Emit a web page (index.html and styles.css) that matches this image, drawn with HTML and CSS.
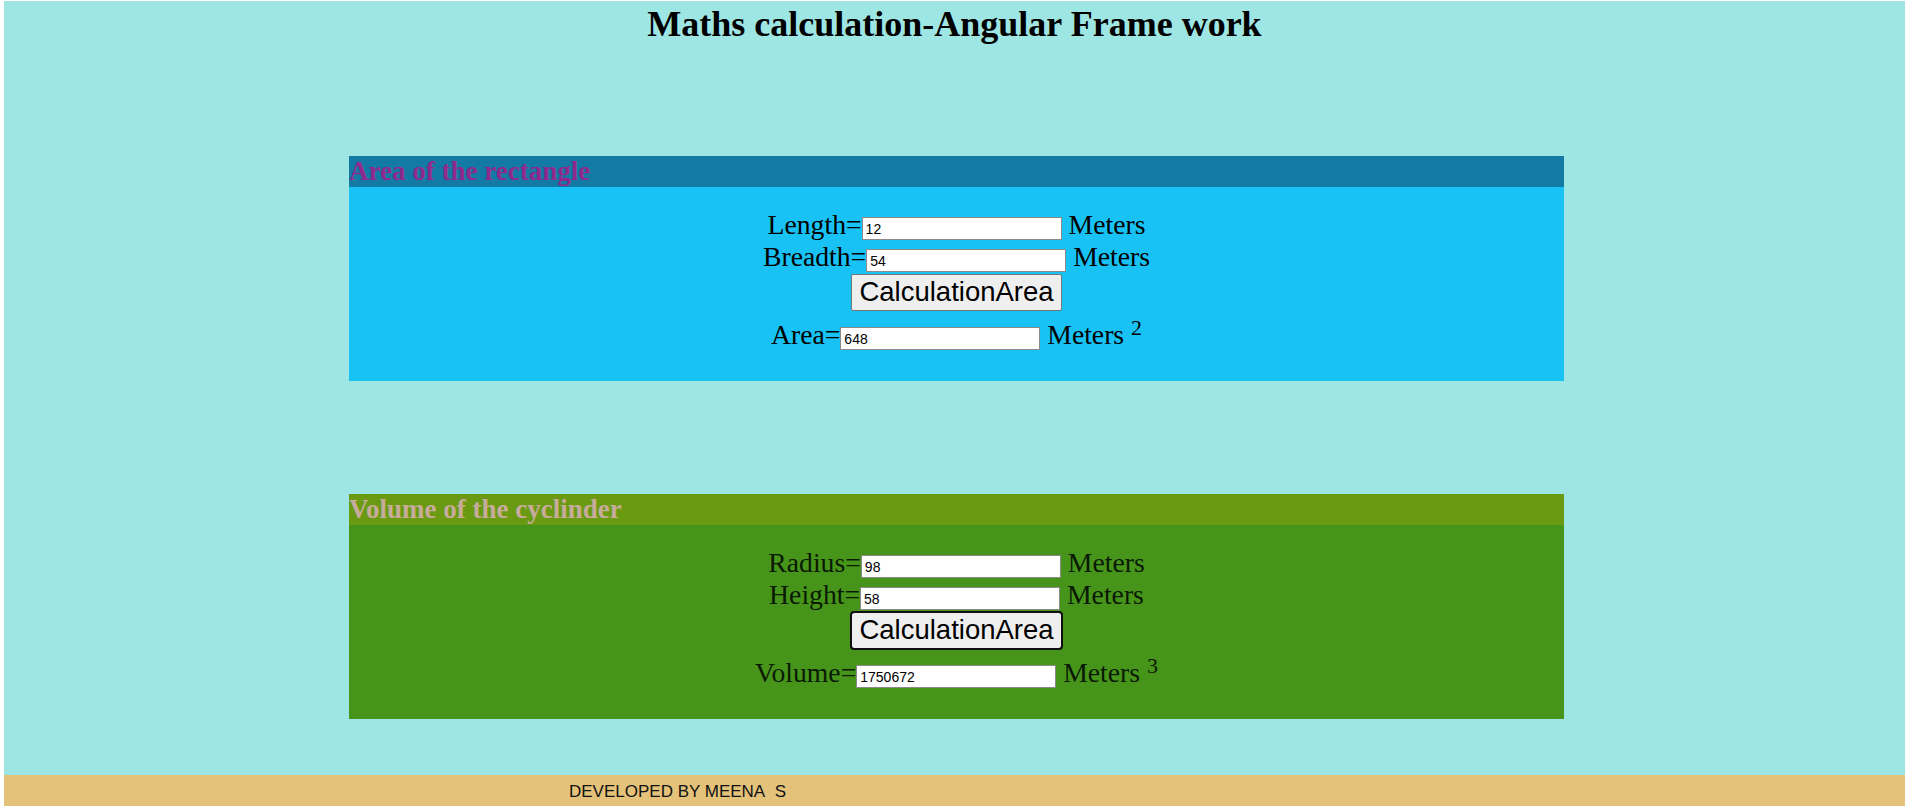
FILE: index.html
```html
<!DOCTYPE html>
<html lang="en">
<head>
<meta charset="utf-8">
<title>Maths calculation</title>
<link rel="stylesheet" href="styles.css">
</head>
<body>
<div class="page">
  <h1 class="title">Maths calculation-Angular Frame work</h1>

  <section class="card card-rect">
    <h3 class="card-head">Area of the rectangle</h3>
    <div class="card-body">
      <div class="row">Length=<input class="field" type="text" value="12"> Meters</div>
      <div class="row">Breadth=<input class="field" type="text" value="54"> Meters</div>
      <div class="row"><button class="btn" type="button">CalculationArea</button></div>
      <div class="row row-result">Area=<input class="field" type="text" value="648"> Meters <sup>2</sup></div>
    </div>
  </section>

  <section class="card card-vol">
    <h3 class="card-head">Volume of the cyclinder</h3>
    <div class="card-body">
      <div class="row">Radius=<input class="field" type="text" value="98"> Meters</div>
      <div class="row">Height=<input class="field" type="text" value="58"> Meters</div>
      <div class="row"><button class="btn btn-focus" type="button">CalculationArea</button></div>
      <div class="row row-result">Volume=<input class="field" type="text" value="1750672"> Meters <sup>3</sup></div>
    </div>
  </section>

  <footer class="footer">DEVELOPED BY MEENA&nbsp; S</footer>
</div>
</body>
</html>
```

FILE: styles.css
```css
html, body {
  margin: 0;
  padding: 0;
  background: #ffffff;
}

.page {
  margin: 1px 0 0 4px;
  height: 805px;
  background: #9ee6e4;
  display: flex;
  flex-direction: column;
  font-family: "Liberation Serif", "Times New Roman", serif;
  color: #000;
}

.title {
  margin: 3px 0 0;
  font-size: 36px;
  font-weight: bold;
  text-align: center;
  line-height: 41px;
}

.card {
  width: 1215px;
  margin-left: 345px;
}

.card-rect {
  margin-top: 111px;
}

.card-vol {
  margin-top: 113px;
}

.card-head {
  margin: 0;
  height: 31px;
  font-size: 27px;
  line-height: 31px;
  font-weight: bold;
}

.card-rect .card-head {
  background: #137aa5;
  color: #8f2a8c;
}

.card-vol .card-head {
  background: #6a9a12;
  color: #c7ab9b;
}

.card-body {
  box-sizing: border-box;
  height: 194px;
  padding-top: 22px;
  font-size: 27.7px;
  line-height: 32px;
  text-align: center;
}

.card-rect .card-body {
  background: #19c2f5;
}

.card-vol .card-body {
  background: #46941a;
  color: #0a1a05;
}

.row {
  white-space: nowrap;
}

.row-result {
  margin-top: 8px;
}

.field {
  box-sizing: border-box;
  width: 200px;
  height: 23px;
  margin: 0;
  padding: 1px 3px 0;
  border: 1px solid #8a8a8a;
  background: #fff;
  font-family: "Liberation Sans", Arial, sans-serif;
  font-size: 14px;
  color: #000;
  vertical-align: baseline;
}

.btn {
  margin: 1px 0 0;
  padding: 1px 7px 2px;
  border: 1px solid #767676;
  border-radius: 2px;
  background: #efefef;
  font-family: "Liberation Sans", Arial, sans-serif;
  font-size: 27.5px;
  line-height: 32px;
  color: #000;
}

.btn-focus {
  outline: 2px solid #101010;
  outline-offset: -1px;
  border-radius: 3px;
}

sup {
  font-size: 22px;
  line-height: 0;
  vertical-align: 9px;
}

.footer {
  margin-top: auto;
  height: 31px;
  box-sizing: border-box;
  padding: 2px 0 0 565px;
  background: #e4c27a;
  font-family: "Liberation Sans", Arial, sans-serif;
  font-size: 17px;
  line-height: 29px;
  color: #111;
}
```
